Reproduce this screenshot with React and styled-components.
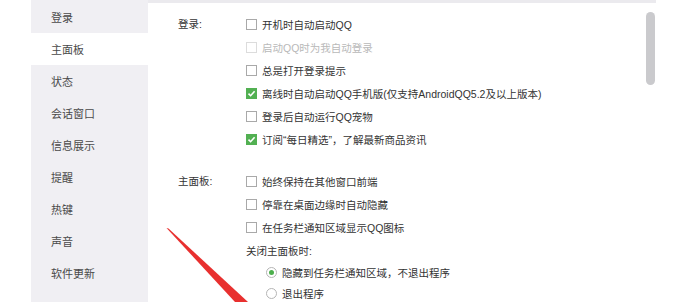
import React from "react";
import styled, { createGlobalStyle } from "styled-components";

const Global = createGlobalStyle`
  html, body { margin: 0; padding: 0; background: #ffffff; }
  body {
    width: 684px; height: 302px; overflow: hidden;
    font-family: "Liberation Sans", "Noto Sans CJK SC", sans-serif;
    font-size: 11px; color: #333;
  }
`;

const Page = styled.div`
  position: relative;
  width: 684px;
  height: 302px;
  display: flex;
  overflow: hidden;
`;

const Gutter = styled.div`
  width: 31px;
  flex: none;
`;

const Sidebar = styled.nav`
  width: 117px;
  flex: none;
  background: #f0eff3;
  padding-top: 1px;
  display: flex;
  flex-direction: column;
`;

const NavItem = styled.div`
  height: 32px;
  display: flex;
  align-items: center;
  padding-left: 20px;
  font-size: 11px;
  color: #4a4a4a;
  background: ${(p) => (p.$active ? "#ffffff" : "transparent")};
`;

const Panel = styled.main`
  width: 508px;
  flex: none;
  border-top: 3px solid #ebeaee;
  display: flex;
  font-size: 10.5px;
`;

const Scroll = styled.div`
  flex: 1;
  padding: 9.5px 0 0 30px;
  display: flex;
  flex-direction: column;
  gap: 19px;
`;

const Section = styled.section`
  display: flex;
`;

const SectionLabel = styled.div`
  width: 68px;
  flex: none;
  height: 23px;
  line-height: 23px;
  color: #333;
`;

const Options = styled.div`
  display: flex;
  flex-direction: column;
`;

const Row = styled.div`
  height: ${(p) => (p.$compact ? 21 : 23)}px;
  display: flex;
  align-items: center;
  gap: 5px;
  padding-left: ${(p) => (p.$indent ? 20 : 0)}px;
  color: ${(p) => (p.$disabled ? "#b9b9b9" : "#333")};
  white-space: nowrap;
`;

const Box = styled.span`
  width: 11px;
  height: 11px;
  box-sizing: border-box;
  flex: none;
  border: 1px solid ${(p) => (p.$disabled ? "#dcdcdc" : p.$checked ? "#52b052" : "#a9a9a9")};
  background: ${(p) => (p.$checked ? "#52b052" : "#fff")};
  display: flex;
  align-items: center;
  justify-content: center;
`;

const Radio = styled.span`
  width: 11px;
  height: 11px;
  box-sizing: border-box;
  flex: none;
  border-radius: 50%;
  border: 1px solid #b5b5b5;
  background: #fff;
  display: flex;
  align-items: center;
  justify-content: center;
  &::after {
    content: "";
    width: 5px;
    height: 5px;
    border-radius: 50%;
    background: ${(p) => (p.$checked ? "#4caf4c" : "transparent")};
  }
`;

const ScrollTrack = styled.div`
  width: 10px;
  flex: none;
  padding-top: 9px;
`;

const Thumb = styled.div`
  width: 9px;
  height: 73px;
  border-radius: 5px;
  background: #cacacd;
`;

const Arrow = styled.svg`
  position: absolute;
  left: 0;
  top: 0;
  pointer-events: none;
`;

function Check({ checked, disabled }) {
  return (
    <Box $checked={checked} $disabled={disabled}>
      {checked && (
        <svg width="9" height="9" viewBox="0 0 9 9">
          <path d="M1.5 4.6 L3.6 6.7 L7.6 2.2" fill="none" stroke="#fff" strokeWidth="1.6" />
        </svg>
      )}
    </Box>
  );
}

const nav = ["登录", "主面板", "状态", "会话窗口", "信息展示", "提醒", "热键", "声音", "软件更新"];

const login = [
  { t: "开机时自动启动QQ" },
  { t: "启动QQ时为我自动登录", d: true },
  { t: "总是打开登录提示" },
  { t: "离线时自动启动QQ手机版(仅支持AndroidQQ5.2及以上版本)", c: true },
  { t: "登录后自动运行QQ宠物" },
  { t: "订阅“每日精选”，了解最新商品资讯", c: true },
];

const mainPanel = ["始终保持在其他窗口前端", "停靠在桌面边缘时自动隐藏", "在任务栏通知区域显示QQ图标"];

export default function App() {
  return (
    <>
      <Global />
      <Page>
        <Gutter />
        <Sidebar>
          {nav.map((n, i) => (
            <NavItem key={n} $active={i === 1}>{n}</NavItem>
          ))}
        </Sidebar>
        <Panel>
          <Scroll>
            <Section>
              <SectionLabel>登录:</SectionLabel>
              <Options>
                {login.map((o) => (
                  <Row key={o.t} $disabled={o.d}>
                    <Check checked={o.c} disabled={o.d} />
                    {o.t}
                  </Row>
                ))}
              </Options>
            </Section>
            <Section>
              <SectionLabel>主面板:</SectionLabel>
              <Options>
                {mainPanel.map((t) => (
                  <Row key={t}>
                    <Check />
                    {t}
                  </Row>
                ))}
                <Row>关闭主面板时:</Row>
                <Row $indent $compact>
                  <Radio $checked />
                  隐藏到任务栏通知区域，不退出程序
                </Row>
                <Row $indent $compact>
                  <Radio />
                  退出程序
                </Row>
              </Options>
            </Section>
          </Scroll>
          <ScrollTrack>
            <Thumb />
          </ScrollTrack>
        </Panel>
        <Arrow width="684" height="302" viewBox="0 0 684 302">
          <polygon points="166.5,228 168.5,228.5 248,302 235,302" fill="#e8302f" />
        </Arrow>
      </Page>
    </>
  );
}
